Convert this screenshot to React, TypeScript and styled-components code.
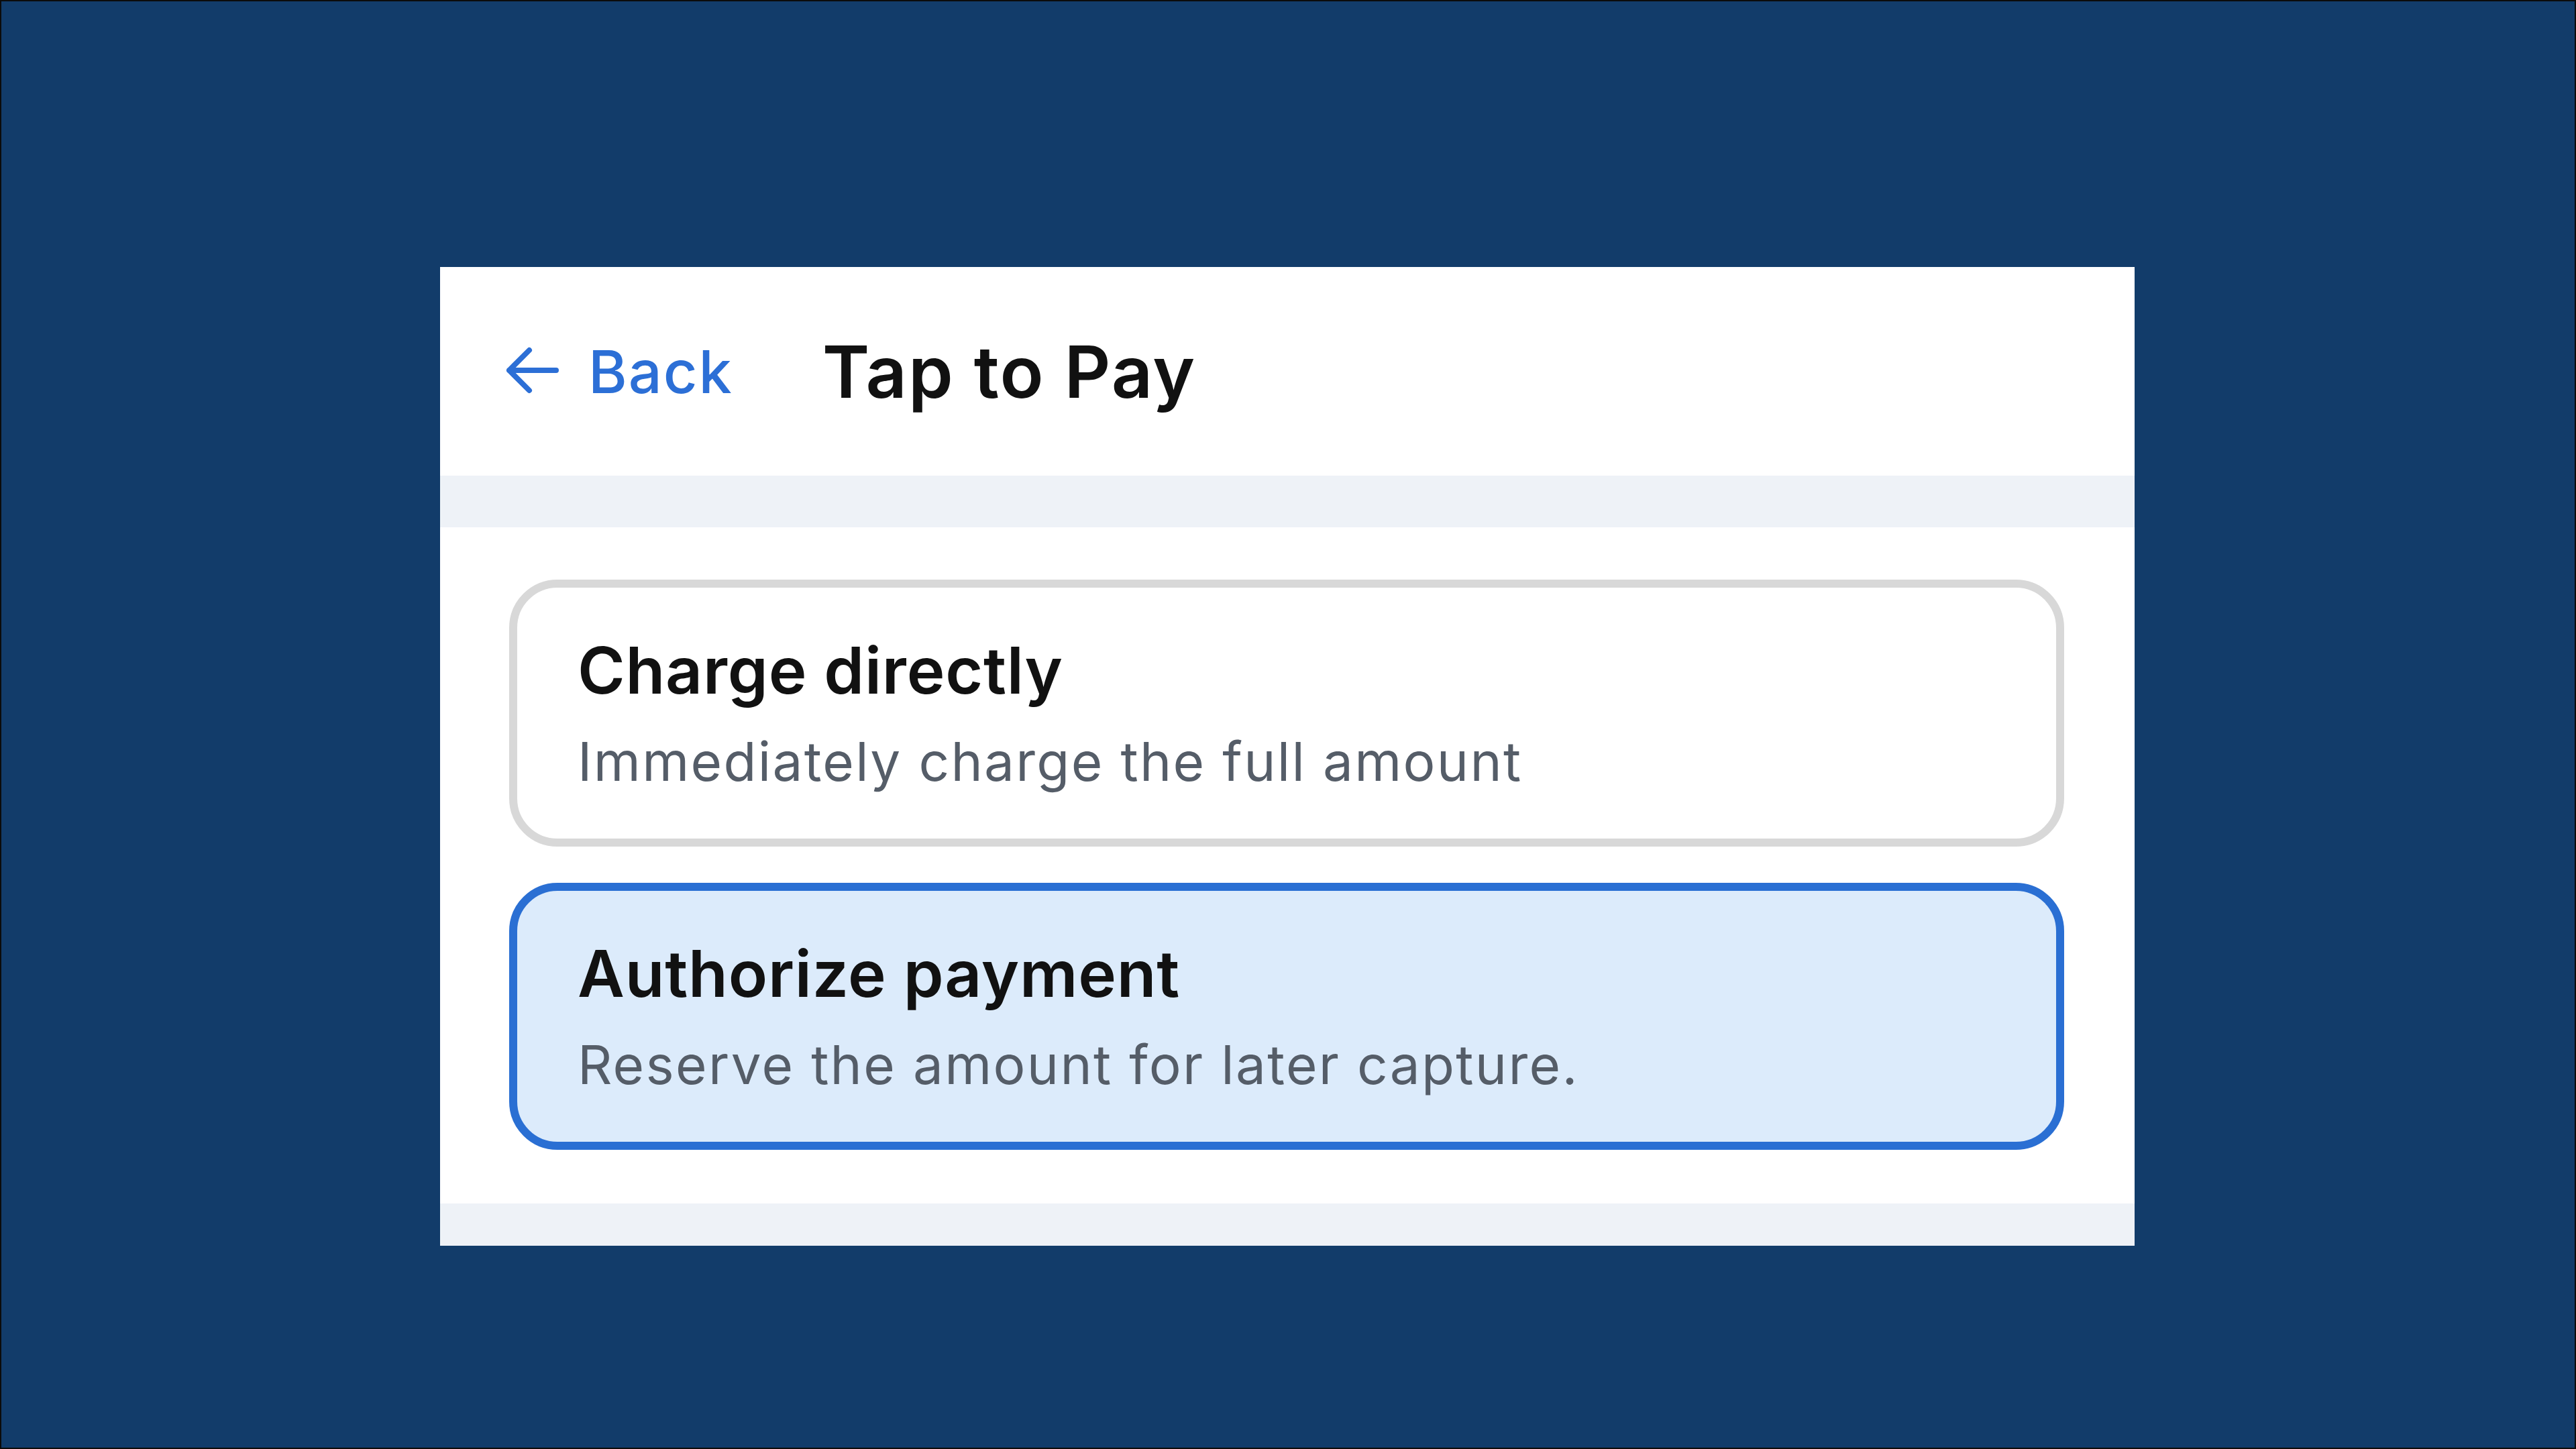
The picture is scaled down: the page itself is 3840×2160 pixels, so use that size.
import { createGlobalStyle, styled } from "styled-components";

const Global = createGlobalStyle`
  html, body {
    margin: 0;
    padding: 0;
    background: #0b0b0b;
  }
  body {
    font-family: Inter, "Noto Sans", "Liberation Sans", sans-serif;
  }
`;

const options = [
  {
    title: "Charge directly",
    text: "Immediately charge the full amount",
    selected: false,
  },
  {
    title: "Authorize payment",
    text: "Reserve the amount for later capture.",
    selected: true,
  },
];

const ArrowLeft = () => (
  <svg width="80" height="80" viewBox="0 0 80 80" fill="none">
    <path
      d="M76 36H6M36 6L6 36l30 30"
      stroke="#2c6fd6"
      strokeWidth="8"
      strokeLinecap="round"
      strokeLinejoin="round"
    />
  </svg>
);

const App = () => {
  return (
    <>
      <Global />
      <Frame>
        <Sheet>
          <Header>
            <BackButton>
              <ArrowLeft />
              <span>Back</span>
            </BackButton>
            <Title>Tap to Pay</Title>
          </Header>
          <Band />
          <Options>
            {options.map((o) => (
              <Option key={o.title} $selected={o.selected}>
                <OptionTitle>{o.title}</OptionTitle>
                <OptionText>{o.text}</OptionText>
              </Option>
            ))}
          </Options>
          <Band $height={63} />
        </Sheet>
      </Frame>
    </>
  );
};

export default App;

const Frame = styled.div`
  box-sizing: border-box;
  width: 3840px;
  height: 2160px;
  border: 2px solid #0b0b0b;
  background: #123c6a;
  padding: 396px 0 0 654px;
`;

const Sheet = styled.div`
  width: 2526px;
  background: #ffffff;
  display: flex;
  flex-direction: column;
`;

const Header = styled.div`
  height: 311px;
  display: flex;
  align-items: center;
  padding-left: 97px;
  gap: 133px;
`;

const BackButton = styled.div`
  display: flex;
  align-items: center;
  gap: 44px;
  color: #2c6fd6;
  font-size: 88px;
  font-weight: 500;
  letter-spacing: 2px;

  svg {
    margin-top: 4px;
  }
`;

const Title = styled.div`
  font-size: 107px;
  font-weight: 600;
  color: #111111;
  letter-spacing: 2px;
`;

const Band = styled.div<{ $height?: number }>`
  height: ${(p) => p.$height ?? 77}px;
  background: #eef2f7;
`;

const Options = styled.div`
  display: flex;
  flex-direction: column;
  gap: 54px;
  padding: 78px 105px 80px 103px;
`;

const Option = styled.div<{ $selected: boolean }>`
  border: 12px solid ${(p) => (p.$selected ? "#2a6fd3" : "#d8d8d8")};
  background: ${(p) => (p.$selected ? "#dcebfb" : "#ffffff")};
  border-radius: 72px;
  padding: 66px 90px 67px;
  display: flex;
  flex-direction: column;
  gap: 30px;
`;

const OptionTitle = styled.div`
  font-size: 96px;
  line-height: 115px;
  font-weight: 600;
  color: #111111;
  letter-spacing: 0.8px;
`;

const OptionText = styled.div`
  font-size: 80px;
  line-height: 96px;
  color: #555d68;
  letter-spacing: 2.3px;
`;
